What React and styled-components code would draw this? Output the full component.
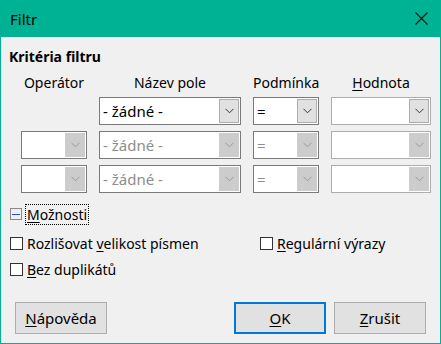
import styled, { createGlobalStyle } from "styled-components";

const GlobalStyle = createGlobalStyle`
  html, body {
    margin: 0;
    padding: 0;
    background: #f0f0f0;
  }
  body {
    font-family: "Noto Sans", "Open Sans", sans-serif;
    font-size: 14px;
    color: #000;
  }
`;

const Window = styled.div`
  width: 441px;
  height: 344px;
  box-sizing: border-box;
  border: 1px solid #00b294;
  border-top: none;
  display: flex;
  flex-direction: column;
  background: #f0f0f0;
`;

const TitleBar = styled.div`
  height: 37px;
  background: #00b294;
  display: flex;
  align-items: center;
  justify-content: space-between;
  padding: 0 13px 0 10px;
  font-size: 15px;
  color: #000;
  margin: 0 -1px;
`;

const Body = styled.div`
  padding: 10px 8px 0 8px;
  display: flex;
  flex-direction: column;
`;

const SectionTitle = styled.div`
  font-weight: 700;
  height: 20px;
  line-height: 20px;
`;

const Grid = styled.div`
  display: grid;
  grid-template-columns: 66px 142px 66px 100px;
  column-gap: 12px;
  row-gap: 6px;
  padding-left: 12px;
  margin-top: 6px;
`;

const Header = styled.div`
  text-align: center;
  line-height: 20px;
  height: 20px;
  margin-bottom: -2px;
`;

const U = styled.span`
  text-decoration: underline;
  text-underline-offset: 2px;
`;

const Combo = styled.div`
  grid-column: ${(p) => p.$col};
  height: 28px;
  box-sizing: border-box;
  border: 1px solid ${(p) => (p.$light ? "#adadad" : "#7a7a7a")};
  background: #fff;
  display: flex;
  align-items: stretch;
  color: ${(p) => (p.$disabled ? "#8d8d8d" : "#000")};
`;

const ComboText = styled.div`
  flex: 1;
  padding-left: 3px;
  display: flex;
  align-items: center;
  white-space: nowrap;
  font-size: 15px;
`;

const ComboButton = styled.div`
  width: 20px;
  margin: 1px;
  box-sizing: border-box;
  background: ${(p) => (p.$disabled ? "#cccccc" : "#e1e1e1")};
  border: 1px solid ${(p) => (p.$disabled ? "#cccccc" : "#adadad")};
  display: flex;
  align-items: center;
  justify-content: center;
`;

const Options = styled.div`
  display: flex;
  align-items: center;
  gap: 4px;
  margin-top: 10px;
  height: 22px;
`;

const Expander = styled.div`
  width: 12px;
  height: 12px;
  box-sizing: border-box;
  border: 1px solid #888;
  background: #f0f0f0;
  display: flex;
  align-items: center;
  justify-content: center;
  margin-left: 1px;
  &::after {
    content: "";
    width: 8px;
    height: 1px;
    background: #2a4fcf;
  }
`;

const FocusLabel = styled.div`
  outline: 1px dotted #000;
  padding: 0 1px;
  line-height: 19px;
`;

const CheckRow = styled.div`
  display: flex;
  margin-top: ${(p) => p.$mt}px;
  height: 20px;
  align-items: center;
`;

const CheckItem = styled.label`
  display: flex;
  align-items: center;
  gap: 4px;
  width: ${(p) => p.$w || "auto"};
  white-space: nowrap;
`;

const Box = styled.span`
  width: 13px;
  height: 13px;
  box-sizing: border-box;
  border: 1px solid #333;
  background: #fff;
  margin-left: 1px;
`;

const Buttons = styled.div`
  display: flex;
  margin-top: 23px;
  padding: 0 6px;
`;

const Button = styled.button`
  width: ${(p) => p.$w}px;
  height: 32px;
  box-sizing: border-box;
  background: #e1e1e1;
  border: ${(p) => (p.$default ? "2px solid #0078d7" : "1px solid #adadad")};
  font-family: inherit;
  font-size: 15px;
  color: #000;
  padding: 0;
  margin-right: ${(p) => p.$mr || 0}px;
`;

function Chevron({ disabled }) {
  return (
    <svg width="9" height="6" viewBox="0 0 9 6">
      <path
        d="M0.5 0.8 L4.5 4.8 L8.5 0.8"
        fill="none"
        stroke={disabled ? "#9a9a9a" : "#333"}
        strokeWidth="1"
      />
    </svg>
  );
}

function Combobox({ col, text, disabled, light }) {
  return (
    <Combo $col={col} $disabled={disabled} $light={light}>
      <ComboText>{text}</ComboText>
      <ComboButton $disabled={disabled}>
        <Chevron disabled={disabled} />
      </ComboButton>
    </Combo>
  );
}

export default function App() {
  return (
    <>
      <GlobalStyle />
      <Window>
        <TitleBar>
          <span>Filtr</span>
          <svg width="13" height="13" viewBox="0 0 13 13">
            <path d="M0.5 0.5 L12.5 12.5 M12.5 0.5 L0.5 12.5" stroke="#111" strokeWidth="1.1" />
          </svg>
        </TitleBar>
        <Body>
          <SectionTitle>Kritéria filtru</SectionTitle>
          <Grid>
            <Header>Operátor</Header>
            <Header>Název pole</Header>
            <Header>Podmínka</Header>
            <Header>
              <U>H</U>odnota
            </Header>

            <Combobox col={2} text="- žádné -" />
            <Combobox col={3} text="=" />
            <Combobox col={4} text="" light />

            <Combobox col={1} text="" disabled />
            <Combobox col={2} text="- žádné -" disabled />
            <Combobox col={3} text="=" disabled />
            <Combobox col={4} text="" disabled light />

            <Combobox col={1} text="" disabled />
            <Combobox col={2} text="- žádné -" disabled />
            <Combobox col={3} text="=" disabled />
            <Combobox col={4} text="" disabled light />
          </Grid>

          <Options>
            <Expander />
            <FocusLabel>
              <U>M</U>ožnosti
            </FocusLabel>
          </Options>

          <CheckRow $mt={8}>
            <CheckItem $w="250px">
              <Box />
              <span>
                Rozlišovat <U>v</U>elikost písmen
              </span>
            </CheckItem>
            <CheckItem>
              <Box />
              <span>
                <U>R</U>egulární výrazy
              </span>
            </CheckItem>
          </CheckRow>
          <CheckRow $mt={6}>
            <CheckItem>
              <Box />
              <span>
                <U>B</U>ez duplikátů
              </span>
            </CheckItem>
          </CheckRow>

          <Buttons>
            <Button $w={92} $mr={127}>
              <U>N</U>ápověda
            </Button>
            <Button $w={92} $mr={8} $default>
              <U>O</U>K
            </Button>
            <Button $w={92}>
              <U>Z</U>rušit
            </Button>
          </Buttons>
        </Body>
      </Window>
    </>
  );
}
